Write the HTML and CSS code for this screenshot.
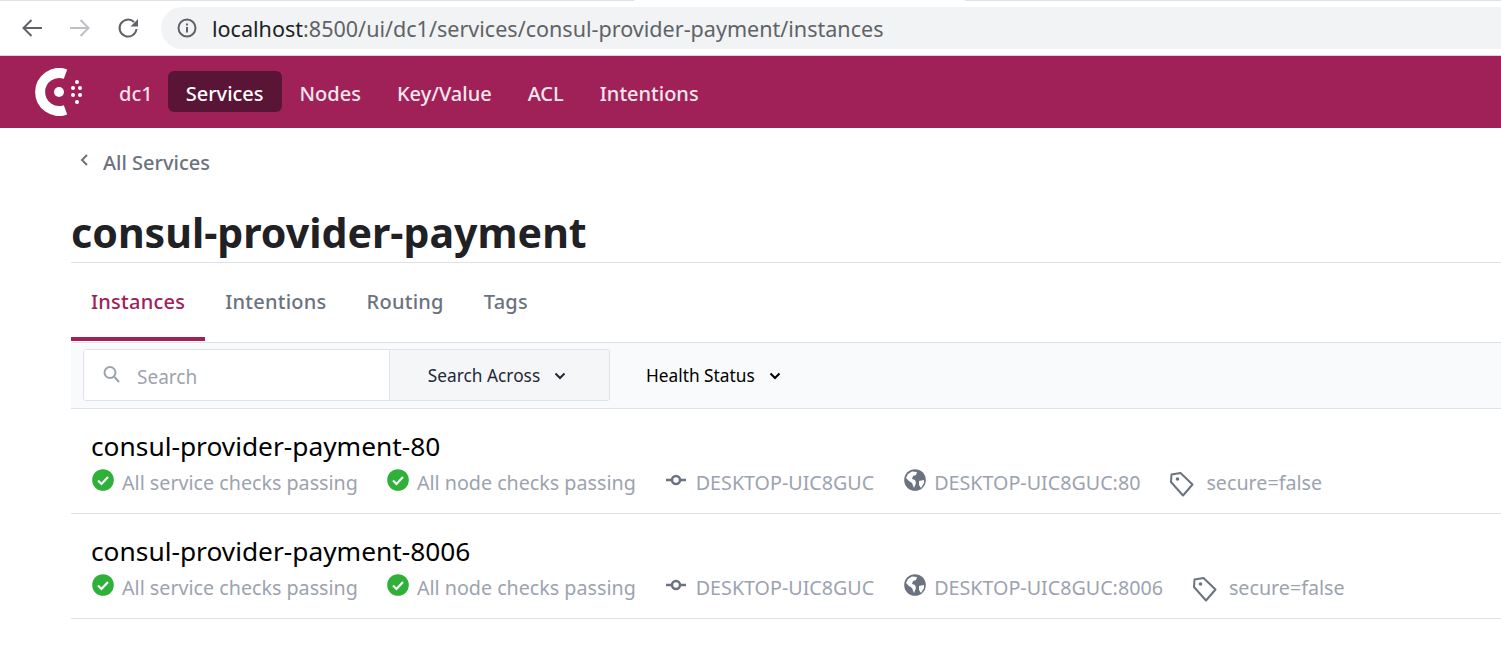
FILE: index.html
```html
<!DOCTYPE html>
<html lang="en">
<head>
    <meta charset="UTF-8">
    <title>consul-provider-payment</title>
    <link rel="stylesheet" href="styles.css">
</head>
<body>
    <!-- browser chrome -->
    <div class="chrome">
        <svg class="chrome-btn" width="24" height="24" viewBox="0 0 24 24"><path d="M22 12H3.500M11.500 4l-8 8 8 8" fill="none" stroke="#5f6368" stroke-width="2"/></svg>
        <svg class="chrome-btn" width="24" height="24" viewBox="0 0 24 24"><path d="M2 12h18.500M12.500 4l8 8-8 8" fill="none" stroke="#bdc1c6" stroke-width="2"/></svg>
        <svg class="chrome-btn" width="24" height="24" viewBox="0 0 24 24"><path d="M20.500 13a8.500 8.500 0 1 1-2.500-7" fill="none" stroke="#5f6368" stroke-width="2"/><path d="M22 3v7.500h-7.500z" fill="#5f6368"/></svg>
        <div class="omnibox">
            <svg width="20" height="20" viewBox="0 0 20 20"><circle cx="10" cy="10" r="8.500" fill="none" stroke="#5f6368" stroke-width="2"/><path d="M9 9h2v5.500H9zM9 5.500h2v2H9z" fill="#5f6368"/></svg>
            <span class="url"><span class="url-host">localhost</span>:8500/ui/dc1/services/consul-provider-payment/instances</span>
        </div>
    </div>

    <nav class="topnav">
        <svg class="logo" width="48" height="48" viewBox="0 0 48 48">
            <path d="M30.500 6.100A19 19 0 1 0 30.500 41.900" fill="none" stroke="#fff" stroke-width="10"/>
            <circle cx="24" cy="24" r="5" fill="#fff"/>
            <circle cx="42" cy="14" r="2" fill="#fff"/>
            <circle cx="38" cy="20" r="2" fill="#fff"/>
            <circle cx="45" cy="20" r="2" fill="#fff"/>
            <circle cx="38" cy="27" r="2" fill="#fff"/>
            <circle cx="45" cy="27" r="2" fill="#fff"/>
            <circle cx="42" cy="34" r="2" fill="#fff"/>
        </svg>
        <a class="nav-dc">dc1</a>
        <a class="nav-item active">Services</a>
        <a class="nav-item">Nodes</a>
        <a class="nav-item">Key/Value</a>
        <a class="nav-item">ACL</a>
        <a class="nav-item">Intentions</a>
    </nav>

    <main class="content">
        <div class="crumb">
            <svg class="crumb-back" width="10" height="14" viewBox="0 0 10 14"><path d="M8 2L3 7l5 5" fill="none" stroke="#6b7280" stroke-width="2"/></svg>
            <span>All Services</span>
        </div>
        <h1>consul-provider-payment</h1>

        <div class="tabs">
            <a class="tab selected">Instances</a>
            <a class="tab">Intentions</a>
            <a class="tab">Routing</a>
            <a class="tab">Tags</a>
        </div>

        <div class="filter-bar">
            <div class="search-group">
                <div class="search-box">
                    <svg width="20" height="20" viewBox="0 0 20 20"><circle cx="8" cy="7.500" r="5.500" fill="none" stroke="#9ca3af" stroke-width="2"/><path d="M12 11.500l5 5.500" stroke="#9ca3af" stroke-width="2"/></svg>
                    <span>Search</span>
                </div>
                <div class="search-across">Search Across
                    <svg width="12" height="8" viewBox="0 0 12 8"><path d="M1.500 1.500L6 6l4.500-4.500" fill="none" stroke="#1f2937" stroke-width="2"/></svg>
                </div>
            </div>
            <div class="health">Health Status
                <svg width="12" height="8" viewBox="0 0 12 8"><path d="M1.500 1.500L6 6l4.500-4.500" fill="none" stroke="#000" stroke-width="2"/></svg>
            </div>
        </div>

        <ul class="instances">
            <li class="instance">
                <div class="name">consul-provider-payment-80</div>
                <div class="meta">
                    <span class="check"><svg width="22" height="22" viewBox="0 0 22 22"><circle cx="11" cy="11" r="10.800" fill="#2eb039"/><path d="M6 11.500l3.500 3.500L16 8" fill="none" stroke="#fff" stroke-width="2.200"/></svg>All service checks passing</span>
                    <span class="check"><svg width="22" height="22" viewBox="0 0 22 22"><circle cx="11" cy="11" r="10.800" fill="#2eb039"/><path d="M6 11.500l3.500 3.500L16 8" fill="none" stroke="#fff" stroke-width="2.200"/></svg>All node checks passing</span>
                    <span class="node"><svg width="20" height="12" viewBox="0 0 20 12"><circle cx="10" cy="6" r="4" fill="none" stroke="#6b7280" stroke-width="2.500"/><path d="M0 6h6M14 6h6" stroke="#6b7280" stroke-width="2.500"/></svg>DESKTOP-UIC8GUC</span>
                    <span class="addr"><svg width="22" height="22" viewBox="0 0 22 22"><circle cx="11" cy="11" r="10.800" fill="#6b7280"/><path d="M4 5l4-2.500 5 .5-1 3-3 1-1 3 3 1 1 3-2 5-2-5-3-2-3-3zM15 12l5-1 0 3-3 5-2-3z" fill="#fff"/></svg>DESKTOP-UIC8GUC:80</span>
                    <span class="tag"><svg width="26" height="26" viewBox="0 0 26 26"><path d="M2.500 3.500L11.500 2l12 11.500-9.500 11L2 11z" fill="none" stroke="#6b7280" stroke-width="2" stroke-linejoin="round"/><circle cx="8.500" cy="8" r="1.800" fill="#6b7280"/></svg>secure=false</span>
                </div>
            </li>
            <li class="instance">
                <div class="name">consul-provider-payment-8006</div>
                <div class="meta">
                    <span class="check"><svg width="22" height="22" viewBox="0 0 22 22"><circle cx="11" cy="11" r="10.800" fill="#2eb039"/><path d="M6 11.500l3.500 3.500L16 8" fill="none" stroke="#fff" stroke-width="2.200"/></svg>All service checks passing</span>
                    <span class="check"><svg width="22" height="22" viewBox="0 0 22 22"><circle cx="11" cy="11" r="10.800" fill="#2eb039"/><path d="M6 11.500l3.500 3.500L16 8" fill="none" stroke="#fff" stroke-width="2.200"/></svg>All node checks passing</span>
                    <span class="node"><svg width="20" height="12" viewBox="0 0 20 12"><circle cx="10" cy="6" r="4" fill="none" stroke="#6b7280" stroke-width="2.500"/><path d="M0 6h6M14 6h6" stroke="#6b7280" stroke-width="2.500"/></svg>DESKTOP-UIC8GUC</span>
                    <span class="addr"><svg width="22" height="22" viewBox="0 0 22 22"><circle cx="11" cy="11" r="10.800" fill="#6b7280"/><path d="M4 5l4-2.500 5 .5-1 3-3 1-1 3 3 1 1 3-2 5-2-5-3-2-3-3zM15 12l5-1 0 3-3 5-2-3z" fill="#fff"/></svg>DESKTOP-UIC8GUC:8006</span>
                    <span class="tag"><svg width="26" height="26" viewBox="0 0 26 26"><path d="M2.500 3.500L11.500 2l12 11.500-9.500 11L2 11z" fill="none" stroke="#6b7280" stroke-width="2" stroke-linejoin="round"/><circle cx="8.500" cy="8" r="1.800" fill="#6b7280"/></svg>secure=false</span>
                </div>
            </li>
        </ul>
    </main>
</body>
</html>
```

FILE: styles.css
```css
* {
    box-sizing: border-box;
}

body {
    margin: 0;
    font-family: "Noto Sans", "Open Sans", sans-serif;
    background-color: #fff;
    overflow: hidden;
}

/* browser chrome, the top line stops under the active tab */
.chrome {
    height: 56px;
    display: flex;
    align-items: center;
    padding: 1px 0 0 20px;
    border-bottom: 1px solid #d5d7db;
    background: linear-gradient(to right, #dee1e6 634px, #fff 634px, #fff 965px, #dee1e6 965px) 0 0 / 100% 1px no-repeat;
}

.chrome-btn {
    margin-right: 24px;
    flex: none;
}

.omnibox {
    flex: 1;
    height: 42px;
    margin-left: -3px;
    padding-left: 16px;
    display: flex;
    align-items: center;
    gap: 15px;
    background-color: #f1f3f4;
    border-radius: 21px 0 0 21px;
}

.url {
    font-size: 21.55px;
    color: #5f6368;
}

.url-host {
    color: #202124;
}

/* top nav */
.topnav {
    height: 72px;
    display: flex;
    align-items: center;
    padding: 0 0 1px 35px;
    background-color: #a02158;
}

.logo {
    margin-right: 36px;
    flex: none;
}

.nav-dc {
    color: #f5dfea;
    font-size: 20px;
    font-weight: 500;
    padding-top: 4px;
    margin-right: 15px;
}

.nav-item {
    color: #f7e6ee;
    font-size: 20px;
    font-weight: 500;
    padding: 10px 18px 6px;
    border-radius: 6px;
    line-height: 25px;
}

.nav-item.active {
    color: #fff;
    background-color: #5a1436;
}

/* page */
.content {
    margin-left: 71px;
}

.crumb {
    display: flex;
    align-items: center;
    gap: 14px;
    height: 68px;
    padding-left: 8px;
    font-size: 20px;
    font-weight: 500;
    color: #6b7280;
}

.crumb-back {
    margin-bottom: 5px;
}

h1 {
    margin: 0;
    padding-top: 6px;
    font-size: 41.1px;
    line-height: 60px;
    font-weight: 700;
    color: #1f2125;
    border-bottom: 1px solid #e1e1ea;
}

.tabs {
    display: flex;
    height: 80px;
    border-bottom: 1px solid #e1e1ea;
}

.tab {
    padding: 25px 20px 0;
    font-size: 20px;
    font-weight: 500;
    letter-spacing: 0.25px;
    color: #6b7280;
}

.tab.selected {
    margin-bottom: 1px;
    color: #a02158;
    border-bottom: 4px solid #a02158;
}

.filter-bar {
    height: 66px;
    display: flex;
    align-items: center;
    padding: 0 12px 2px;
    background-color: #f9fafb;
    border-bottom: 1px solid #e1e1ea;
}

.search-group {
    display: flex;
    height: 52px;
    width: 527px;
    border: 1px solid #dfe1e8;
    border-radius: 3px;
    overflow: hidden;
}

.search-box {
    width: 306px;
    background-color: #fff;
    border-right: 1px solid #dfe1e8;
    display: flex;
    align-items: center;
    gap: 15px;
    padding: 4px 0 0 18px;
    font-size: 19px;
    color: #9ca3af;
}

.search-box svg {
    margin-bottom: 4px;
}

.search-across {
    flex: 1;
    display: flex;
    align-items: center;
    justify-content: center;
    gap: 14px;
    padding: 2px 5px 0 0;
    background-color: #f5f6f8;
    font-size: 17.3px;
    color: #1f2937;
}

.health {
    margin-left: 36px;
    padding-top: 2px;
    display: flex;
    align-items: center;
    gap: 14px;
    font-size: 17.3px;
    color: #000;
}

.instances {
    list-style: none;
    margin: 0;
    padding: 0;
}

.instance {
    height: 105px;
    padding: 20px 0 0 20px;
    border-bottom: 1px solid #e1e1ea;
}

.name {
    font-size: 26.3px;
    line-height: 35px;
    color: #000;
}

.meta {
    display: flex;
    align-items: center;
    height: 36px;
    font-size: 19.7px;
    color: #9ca3af;
}

.meta span {
    display: flex;
    align-items: center;
    margin-right: 29px;
}

.meta svg {
    margin: 0 8px 4px 0;
    flex: none;
}

.meta .check svg {
    margin-left: 1px;
}

.meta .check:first-child {
    margin-right: 28px;
}

.meta .check + .check,
.meta .node {
    margin-right: 30px;
}

.meta .node svg {
    margin-right: 10px;
}

.meta .tag svg {
    margin: 4px 11px 0 0;
}
```
